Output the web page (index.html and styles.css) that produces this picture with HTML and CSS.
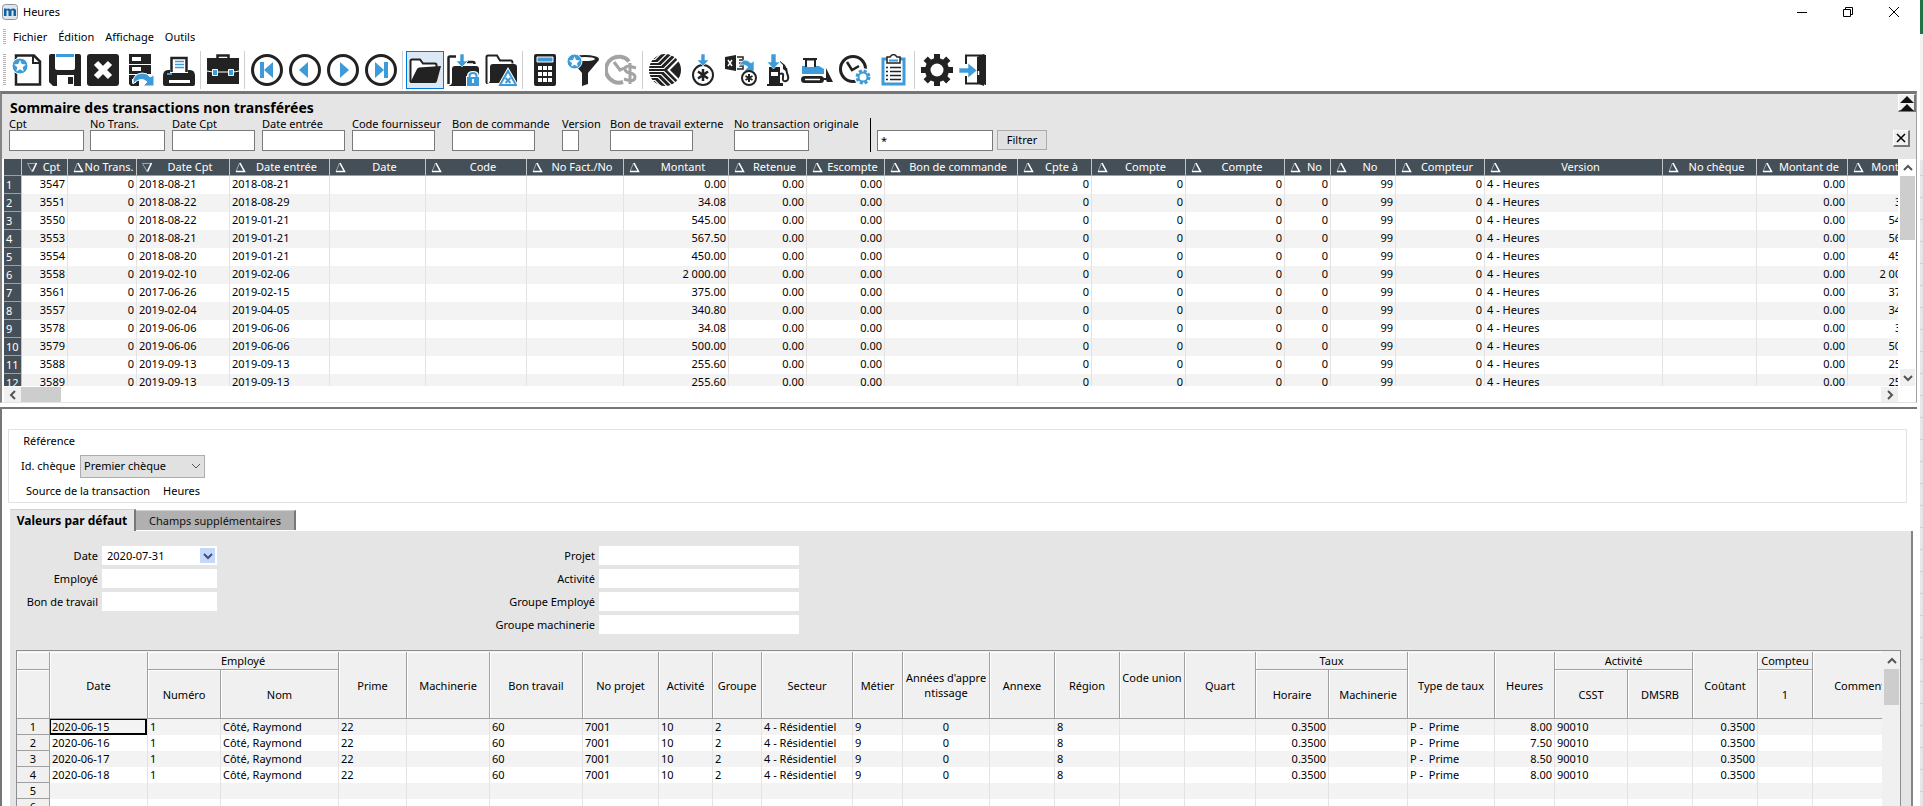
FILE: index.html
```html
<!DOCTYPE html>
<html lang="fr">
<head>
<meta charset="UTF-8">
<meta name="viewport" content="width=device-width, initial-scale=1.0">
<title>Heures</title>
<link rel="stylesheet" href="styles.css">
</head>
<body>

<div class="desktop">
<main class="window">

  <header class="titlebar">
    <svg class="logo" viewBox="0 0 16 16"><rect x=".5" y=".5" width="15" height="15" rx="3" fill="#dfe6ec" stroke="#8b959e"/><path d="M2 12V4.500h2.500v1q2-2 4 0 3-2 5.500.5V12h-2.500V7q-1-1.500-2 0v5h-3V7q-1-1.500-2 0v5z" fill="#0e62a6"/></svg>
    <span class="title">Heures</span>
    <div class="window-buttons">
      <button aria-label="Réduire"><svg viewBox="0 0 12 12"><path d="M1 6.500h10" stroke="#000" fill="none"/></svg></button>
      <button aria-label="Restaurer"><svg viewBox="0 0 12 12"><path d="M1.500 3.500h7v7h-7zM3.500 3V1.500h7v7H9" stroke="#000" fill="none"/></svg></button>
      <button aria-label="Fermer"><svg viewBox="0 0 12 12"><path d="M1 1l10 10M11 1L1 11" stroke="#000" fill="none"/></svg></button>
    </div>
  </header>

  <nav class="menubar">
    <span class="grip"></span>
    <a href="#">Fichier</a>
    <a href="#">Édition</a>
    <a href="#">Affichage</a>
    <a href="#">Outils</a>
  </nav>

  <div class="toolbar">
    <span class="grip"></span>
    <button aria-label="Nouveau"><svg viewBox="0 0 32 32"><path d="M5 1.500h18l6 6v23H5z" fill="#fff" stroke="#222" stroke-width="2.500"/><path d="M22 1v8h8" fill="none" stroke="#222" stroke-width="2"/><circle cx="9" cy="12" r="8" fill="#3d9bd9" stroke="#fff"/><path d="M9 6l1.700 4 4.300.4-3.300 2.800 1 4.300-3.700-2.300-3.700 2.300 1-4.300L3 10.400l4.300-.4z" fill="#fff"/></svg></button>
    <button aria-label="Enregistrer"><svg viewBox="0 0 32 32"><path d="M0 2q0-2 2-2h28q2 0 2 2v30H4l-4-4z" fill="#222"/><path d="M6 0h20v14q0 2-2 2H8q-2 0-2-2z" fill="#fff"/><path d="M7 0h18v3H7z" fill="#3d9bd9"/><path d="M8 21h17v11H8z" fill="#fff"/><path d="M19 23h5v7h-5z" fill="#222"/></svg></button>
    <button aria-label="Supprimer"><svg viewBox="0 0 32 32"><rect width="32" height="32" rx="3" fill="#222"/><path d="M9 9l14 14M23 9L9 23" stroke="#fff" stroke-width="6"/></svg></button>
    <button aria-label="Actualiser"><svg viewBox="0 0 32 32"><path d="M4 0h22v10H4zM4 11h22v9H4zM4 21h10v11H6l-2-2z" fill="#222"/><path d="M7 3h9v4H7zM7 13h9v4H7zM7 25h4v4H7z" fill="#fff"/><path d="M8 30q-1-10 9-11 6 0 8 4l4-2v11H18l4-4q-6-6-14 2z" fill="#3d9bd9" stroke="#fff"/></svg></button>
    <button aria-label="Imprimer"><svg viewBox="0 0 32 32"><path d="M8.500 18V4h15v14" fill="#fff" stroke="#222" stroke-width="2.500"/><path d="M12 7.500h9M12 10.500h9M12 13.500h9" stroke="#3d9bd9" stroke-width="1.500"/><path d="M0 22q0-6 5-6h2v3h18v-3h2q5 0 5 6v8q0 2-2 2H2q-2 0-2-2z" fill="#222"/><path d="M4 19h5v2H4z" fill="#3d9bd9"/><path d="M6 26h21v3H6z" fill="#fff"/></svg></button>
    <span class="sep"></span>
    <button aria-label="Porte-documents"><svg viewBox="0 0 32 32"><path d="M10.500 5V1.500h11V5" fill="none" stroke="#222" stroke-width="2.500"/><path d="M0 4h32v26H0z" fill="#222"/><path d="M0 17q5 1 7 1h18q3 0 7-1" fill="none" stroke="#fff"/><path d="M5.500 15.500h5v6h-5zM21.500 15.500h5v6h-5z" fill="#3d9bd9" stroke="#fff"/></svg></button>
    <span class="sep"></span>
    <button aria-label="Premier"><svg viewBox="0 0 32 32"><circle cx="16" cy="16" r="14.500" fill="#fff" stroke="#222" stroke-width="3"/><path d="M9 8h4v16H9zM22 8v16l-9-8z" fill="#3d9bd9"/></svg></button>
    <button aria-label="Précédent"><svg viewBox="0 0 32 32"><circle cx="16" cy="16" r="14.500" fill="#fff" stroke="#222" stroke-width="3"/><path d="M19 8v16l-9-8z" fill="#3d9bd9"/></svg></button>
    <button aria-label="Suivant"><svg viewBox="0 0 32 32"><circle cx="16" cy="16" r="14.500" fill="#fff" stroke="#222" stroke-width="3"/><path d="M13 8v16l9-8z" fill="#3d9bd9"/></svg></button>
    <button aria-label="Dernier"><svg viewBox="0 0 32 32"><circle cx="16" cy="16" r="14.500" fill="#fff" stroke="#222" stroke-width="3"/><path d="M19 8h4v16h-4zM10 8v16l9-8z" fill="#3d9bd9"/></svg></button>
    <span class="sep"></span>
    <button class="active" aria-label="Ouvrir"><svg viewBox="0 0 32 32"><path d="M1.500 28V7q0-1.500 1.500-1.500h8l3 4h12q1.500 0 1.500 1.500v3" fill="#fff" stroke="#222" stroke-width="2"/><path d="M1 29L8 15q.5-1 2-1.500L32 12l-4 15q-.5 2-2 2z" fill="#222"/></svg></button>
    <button aria-label="Verrouiller"><svg viewBox="0 0 32 32"><path d="M1.500 30V4q0-1.500 1.500-1.500h6M20 8h6q1.500 0 1.500 2" fill="none" stroke="#222" stroke-width="2.500"/><path d="M1 31q3 1 4-2V15q0-3 3-3h21q3 0 3 3v17H3z" fill="#222"/><path d="M13 0h4v7h4l-6 6-6-6h4z" fill="#3d9bd9" stroke="#fff" stroke-width=".6"/><path d="M19 22h1q0-5 6-5t6 5v10H19z" fill="#fff"/><path d="M22.500 23v-1q0-3 3.500-3t3.500 3v1" fill="none" stroke="#3d9bd9" stroke-width="2"/><path d="M20 23h12v9H20z" fill="#3d9bd9"/><path d="M25 25h2v4h-2z" fill="#fff"/></svg></button>
    <button aria-label="Dossier en erreur"><svg viewBox="0 0 32 32"><path d="M1.500 29V3q0-1.500 1.500-1.500h9l3 5h11q1.500 0 1.500 3" fill="none" stroke="#222" stroke-width="2"/><path d="M1 30q3 0 4-3V13q0-3 3-3h21q3 0 3 3v16H1z" fill="#222"/><path d="M23 16l8.500 15h-17z" fill="#fff" stroke="#fff" stroke-width="3"/><path d="M23 17l8 14H15z" fill="#fff" stroke="#3d9bd9" stroke-width="2"/><path d="M20.500 24l5 5M25.500 24l-5 5" stroke="#3d9bd9" stroke-width="2"/></svg></button>
    <span class="sep"></span>
    <button aria-label="Calculatrice"><svg viewBox="0 0 32 32"><rect x="5" y="0" width="22" height="32" rx="2" fill="#222"/><path d="M8 3h16v5H8z" fill="#3d9bd9" stroke="#fff"/><path d="M11 12v16M16 12v16M21 12v16" stroke="#fff" stroke-width="4" stroke-dasharray="4 2" fill="none"/></svg></button>
    <button aria-label="Filtre"><svg viewBox="0 0 32 32"><ellipse cx="18" cy="5" rx="14" ry="4" fill="#222"/><path d="M4 6h28L21 19v11l-6 2V19z" fill="#222"/><ellipse cx="18" cy="5" rx="10" ry="2" fill="#fff"/><circle cx="7.500" cy="7.500" r="7.500" fill="#3d9bd9" stroke="#fff"/><path d="M7.500 2.500L9 6l4 .4-3 2.600.8 3.700-3.300-2-3.300 2L5 9 2 6.400 6 6z" fill="#fff"/></svg></button>
    <button aria-label="Taux"><svg viewBox="0 0 32 32"><path d="M24 7.500A13 13 0 1 0 18 28" fill="none" stroke="#a3a3a3" stroke-width="4"/><path d="M9 8l6 8 4-2" fill="none" stroke="#a3a3a3" stroke-width="3"/><path d="M31 14q-11-4-11 1 0 3 5 4t5 4q0 6-11 2M25 9v21" fill="none" stroke="#a3a3a3" stroke-width="3"/></svg></button>
    <span class="sep"></span>
    <button aria-label="Projets"><svg viewBox="0 0 32 32"><circle cx="16" cy="16" r="16" fill="#222"/><path d="M32 3.500L19.500 16 32 28.500" fill="none" stroke="#fff" stroke-width="2"/><path d="M0 5.500h6l6-6M0 8.500h9l9-9M0 11.500h12l12-12M0 14.500h15l14-14M0 17.500h15l14 14M0 20.500h12l12 12M0 23.500h9l9 9M0 26.500h6l6 6" fill="none" stroke="#fff" stroke-width="1.200"/></svg></button>
    <button aria-label="Importer"><svg viewBox="0 0 32 32"><circle cx="16" cy="21" r="10" fill="#fff" stroke="#222" stroke-width="2"/><path d="M16 15v12M11 17.500l10 7M21 17.500l-10 7" stroke="#222" stroke-width="2.500"/><path d="M14 0h4v6h4l-6 6-6-6h4z" fill="#3d9bd9" stroke="#fff" stroke-width=".6"/></svg></button>
    <button aria-label="Importer d'Excel"><svg viewBox="0 0 32 32"><path d="M0 3l11-2v16L0 15z" fill="#222"/><path d="M3 6l4 6M7 6l-4 6" stroke="#fff" stroke-width="1.500"/><path d="M12 3h6v12h-6M14 6h3M14 9h3M14 12h3" fill="none" stroke="#222" stroke-width="1.500"/><path d="M14 12q4-10 12-3l3-2v10H19l4-4q-5-4-9-1z" fill="#3d9bd9" stroke="#fff" stroke-width=".6"/><circle cx="24" cy="24" r="7" fill="#fff" stroke="#222" stroke-width="2"/><path d="M24 20v8M20.500 22l7 4M27.500 22l-7 4" stroke="#222" stroke-width="2"/></svg></button>
    <button aria-label="Carburant"><svg viewBox="0 0 32 32"><path d="M6 13h11v19H4v-2h2z" fill="#222"/><path d="M17 29h3v3h-3z" fill="#222"/><path d="M8 18h7v4H8z" fill="#fff"/><path d="M8 0h5v8h4l-6.500 7L4 8h4z" fill="#3d9bd9" stroke="#fff" stroke-width=".6"/><path d="M17 20q4-2 3 3t3 4 1-8l-1-5" fill="none" stroke="#222" stroke-width="2"/><path d="M17 7l5 4q2 3 2 7l-4-3V11l-3-3z" fill="#222"/></svg></button>
    <button aria-label="Machinerie"><svg viewBox="0 0 32 32"><path d="M1 12h17l5 3v5H1z" fill="#3d9bd9"/><path d="M5 13V5.500h9V13" fill="#fff" stroke="#222" stroke-width="2"/><path d="M2 4h14v2H2z" fill="#222"/><rect x="0" y="22" width="23" height="7" rx="3.500" fill="#222"/><path d="M4 25.500h15" stroke="#fff" stroke-width="1.500"/><path d="M20 24h5V14l7 14h-6l-1-2h-5z" fill="#222"/></svg></button>
    <button aria-label="Horaire"><svg viewBox="0 0 32 32"><circle cx="14" cy="15" r="12.500" fill="#fff" stroke="#222" stroke-width="3"/><path d="M8 8l5 8 7-4" fill="none" stroke="#222" stroke-width="2.500"/><circle cx="24" cy="23" r="9" fill="#fff"/><circle cx="24" cy="23" r="6" fill="none" stroke="#3d9bd9" stroke-width="3" stroke-dasharray="3 1.700"/><circle cx="24" cy="23" r="4.500" fill="#fff" stroke="#3d9bd9" stroke-width="2"/></svg></button>
    <button aria-label="Liste"><svg viewBox="0 0 32 32"><path d="M6 5h21v25H6z" fill="#fff" stroke="#3d9bd9" stroke-width="3"/><path d="M10 3h3q3.500-5 7 0h3v6H10z" fill="#fff" stroke="#222" stroke-width="1.500"/><path d="M12 6.500h9" stroke="#3d9bd9" stroke-width="2"/><path d="M9 13.500h15M9 17.500h15M9 21.500h15M9 25.500h15" stroke="#222" stroke-width="1.500" stroke-dasharray="2 2 11 9"/></svg></button>
    <span class="sep"></span>
    <button aria-label="Options"><svg viewBox="0 0 32 32"><circle cx="16" cy="16" r="9" fill="none" stroke="#222" stroke-width="6"/><path d="M16 0v32M0 16h32M4.700 4.700l22.600 22.600M27.300 4.700L4.700 27.300" stroke="#222" stroke-width="6"/><circle cx="16" cy="16" r="6.500" fill="#fff"/></svg></button>
    <button aria-label="Quitter"><svg viewBox="0 0 32 32"><path d="M7 10V1.500h18v28H7V22" fill="none" stroke="#222" stroke-width="2"/><path d="M18 3l7-3v32l-7-3z" fill="#222"/><path d="M26.500 1v30" stroke="#222"/><path d="M19.500 17v4" stroke="#fff" stroke-width="1.500"/><path d="M0 14h9V9l9 7.500L9 24v-5H0z" fill="#3d9bd9" stroke="#fff" stroke-width=".6"/></svg></button>
  </div>

  <section class="summary">
    <div class="summary-head">
      <h1>Sommaire des transactions non transférées</h1>
      <button class="raised collapse" aria-label="Masquer"><svg viewBox="0 0 14 16"><path d="M7 1l7 7H0zM7 9l7 7H0z" fill="#111"/></svg></button>
    </div>
    <form class="filters">
      <div class="filter"><label for="f-cpt">Cpt</label><input class="medium" id="f-cpt" type="text"></div>
      <div class="filter"><label for="f-trans">No Trans.</label><input class="medium" id="f-trans" type="text"></div>
      <div class="filter"><label for="f-datecpt">Date Cpt</label><input class="long" id="f-datecpt" type="text"></div>
      <div class="filter"><label for="f-dateent">Date entrée</label><input class="long" id="f-dateent" type="text"></div>
      <div class="filter"><label for="f-four">Code fournisseur</label><input class="long" id="f-four" type="text"></div>
      <div class="filter"><label for="f-bon">Bon de commande</label><input class="long" id="f-bon" type="text"></div>
      <div class="filter"><label for="f-ver">Version</label><input class="tiny" id="f-ver" type="text"></div>
      <div class="filter"><label for="f-ext">Bon de travail externe</label><input class="long" id="f-ext" type="text"></div>
      <div class="filter"><label for="f-orig">No transaction originale</label><input class="medium" id="f-orig" type="text"></div>
      <div class="search">
        <input type="text" value="*" aria-label="Recherche">
        <button type="button" class="filter-btn">Filtrer</button>
      </div>
      <button type="button" class="raised close" aria-label="Fermer"><svg viewBox="0 0 10 10"><path d="M1 1l8 8M9 1L1 9" stroke="#000" stroke-width="1.500" fill="none"/></svg></button>
    </form>
    <div class="grid-area">
      <div class="grid-view list-view">
        <table class="list" id="list"></table>
      </div>
      <div class="vscroll">
        <button aria-label="Haut"><svg viewBox="0 0 10 10"><path d="M1 7l4-4 4 4" /></svg></button>
        <span class="thumb"></span>
        <button class="last" aria-label="Bas"><svg viewBox="0 0 10 10"><path d="M1 3l4 4 4-4" /></svg></button>
      </div>
    </div>
    <div class="hscroll">
      <button aria-label="Gauche"><svg viewBox="0 0 10 10"><path d="M7 1L3 5l4 4" /></svg></button>
      <span class="thumb"></span>
      <button class="last" aria-label="Droite"><svg viewBox="0 0 10 10"><path d="M3 1l4 4-4 4" /></svg></button>
    </div>
  </section>

  <section class="detail">
    <div class="source">
      <div class="source-row"><span class="source-label">Référence</span></div>
      <div class="source-row">
        <label class="source-label" for="cheque">Id. chèque</label>
        <select id="cheque"><option>Premier chèque</option></select>
      </div>
      <div class="source-row source-text"><span>Source de la transaction</span><span>Heures</span></div>
    </div>

    <div class="tabs">
      <button class="tab selected">Valeurs par défaut</button>
      <button class="tab">Champs supplémentaires</button>
    </div>

    <div class="tab-panel">
      <form class="defaults">
        <div class="fields">
          <label for="d-date">Date</label>
          <div class="date-box">
            <input id="d-date" type="text" value="2020-07-31">
            <button type="button" aria-label="Calendrier"><svg viewBox="0 0 10 10"><path d="M1 3l4 4 4-4" /></svg></button>
          </div>
          <label for="d-emp">Employé</label><input id="d-emp" type="text">
          <label for="d-bon">Bon de travail</label><input id="d-bon" type="text">
        </div>
        <div class="fields wide">
          <label for="d-proj">Projet</label><input id="d-proj" type="text">
          <label for="d-act">Activité</label><input id="d-act" type="text">
          <label for="d-gemp">Groupe Employé</label><input id="d-gemp" type="text">
          <label for="d-gmach">Groupe machinerie</label><input id="d-gmach" type="text">
        </div>
      </form>

      <div class="entry-area">
        <div class="grid-view">
          <table class="entry" id="entry">
            <thead>
              <tr class="group-row">
                <th></th>
                <th rowspan="2">Date</th>
                <th colspan="2">Employé</th>
                <th rowspan="2">Prime</th>
                <th rowspan="2">Machinerie</th>
                <th rowspan="2">Bon travail</th>
                <th rowspan="2">No projet</th>
                <th rowspan="2">Activité</th>
                <th rowspan="2">Groupe</th>
                <th rowspan="2">Secteur</th>
                <th rowspan="2">Métier</th>
                <th rowspan="2">Années d'appre<br>ntissage</th>
                <th rowspan="2">Annexe</th>
                <th rowspan="2">Région</th>
                <th rowspan="2">Code union<br>&nbsp;</th>
                <th rowspan="2">Quart</th>
                <th colspan="2">Taux</th>
                <th rowspan="2">Type de taux</th>
                <th rowspan="2">Heures</th>
                <th colspan="2">Activité</th>
                <th rowspan="2">Coûtant</th>
                <th>Compteu</th>
                <th rowspan="2">Commentaire</th>
              </tr>
              <tr class="name-row">
                <th></th>
                <th>Numéro</th>
                <th>Nom</th>
                <th>Horaire</th>
                <th>Machinerie</th>
                <th>CSST</th>
                <th>DMSRB</th>
                <th>1</th>
              </tr>
            </thead>
          </table>
        </div>
        <div class="vscroll entry-scroll">
          <button aria-label="Haut"><svg viewBox="0 0 10 10"><path d="M1 7l4-4 4 4" /></svg></button>
          <span class="thumb"></span>
        </div>
      </div>
    </div>
  </section>

</main>
<aside class="behind"></aside>
</div>

<script>
  // name, width, alignment
  const listColumns = [
    ['Cpt', 46, 'right'], ['No Trans.', 69, 'right'], ['Date Cpt', 93], ['Date entrée', 100],
    ['Date', 96], ['Code', 101], ['No Fact./No', 97], ['Montant', 105, 'right'],
    ['Retenue', 78, 'right'], ['Escompte', 78, 'right'], ['Bon de commande', 133],
    ['Cpte à', 74, 'right'], ['Compte', 94, 'right'], ['Compte', 99, 'right'], ['No', 46, 'right'],
    ['No', 65, 'right'], ['Compteur', 89, 'right'], ['Version', 178], ['No chèque', 94],
    ['Montant de', 91, 'right'], ['Montant', 78, 'right']
  ];

  const transactions = [
    ['3547', '2018-08-21', '2018-08-21', '0.00'],
    ['3551', '2018-08-22', '2018-08-29', '34.08'],
    ['3550', '2018-08-22', '2019-01-21', '545.00'],
    ['3553', '2018-08-21', '2019-01-21', '567.50'],
    ['3554', '2018-08-20', '2019-01-21', '450.00'],
    ['3558', '2019-02-10', '2019-02-06', '2 000.00'],
    ['3561', '2017-06-26', '2019-02-15', '375.00'],
    ['3557', '2019-02-04', '2019-04-05', '340.80'],
    ['3578', '2019-06-06', '2019-06-06', '34.08'],
    ['3579', '2019-06-06', '2019-06-06', '500.00'],
    ['3588', '2019-09-13', '2019-09-13', '255.60'],
    ['3589', '2019-09-13', '2019-09-13', '255.60']
  ];

  const entryColumns = [
    [98], [73], [118], [68], [83], [93], [76], [54], [49], [91], [50], [87, 'center'], [65], [65],
    [65], [71], [73, 'right'], [79], [87], [60, 'right'], [73], [65], [65, 'right'], [55], [114]
  ];

  const hours = [['2020-06-15', '8.00'], ['2020-06-16', '7.50'], ['2020-06-17', '8.50'], ['2020-06-18', '8.00']];

  function sortIcon(down) {
    const light = down ? 'M5 9.500L.5 1.500h9' : 'M4.500 1L9.500 9.500H1';
    const dark = down ? 'M9.500 1L5 9.500' : 'M1 9.500L4.500 1';
    const edge = down ? 'M9.500 1L5.500 9.500' : 'M5 1l4.500 8.500H1';
    return '<svg viewBox="0 0 11 11"><path d="' + light + '" stroke="#a0a6ab" fill="none"/><path d="' + dark +
      '" stroke="#a0a6ab" fill="none"/><path d="' + edge + '" stroke="#fff" stroke-width="1.500" fill="none"/></svg>';
  }

  function cell(text, align) {
    return '<td' + (align ? ' class="' + align + '"' : '') + '>' + text + '</td>';
  }

  function buildList() {
    let html = '<colgroup><col style="width:18px">';
    listColumns.forEach(c => { html += '<col style="width:' + c[1] + 'px">'; });
    html += '</colgroup><thead><tr><th></th>';
    listColumns.forEach((c, i) => {
      html += '<th><div class="head-cell">' + sortIcon(i === 0 || i === 2) + '<span>' + c[0] + '</span></div></th>';
    });
    html += '</tr></thead><tbody>';
    transactions.forEach((t, i) => {
      const values = [t[0], '0', t[1], t[2], '', '', '', t[3], '0.00', '0.00', '', '0', '0', '0', '0', '99', '0',
        '4 - Heures', '', '0.00', t[3]];
      html += '<tr><th>' + (i + 1) + '</th>';
      values.forEach((v, j) => { html += cell(v, listColumns[j][2]); });
      html += '</tr>';
    });
    document.getElementById('list').innerHTML = html + '</tbody>';
  }

  function buildEntry() {
    const table = document.getElementById('entry');
    let cols = '<colgroup><col style="width:33px">';
    entryColumns.forEach(c => { cols += '<col style="width:' + c[0] + 'px">'; });
    table.insertAdjacentHTML('afterbegin', cols + '</colgroup>');
    let html = '<tbody>';
    for (let i = 0; i < 6; i++) {
      const h = hours[i];
      const values = h ? [h[0], '1', 'Côté, Raymond', '22', '', '60', '7001', '10', '2', '4 - Résidentiel', '9', '0', '',
        '8', '', '', '0.3500', '', 'P -&nbsp; Prime', h[1], '90010', '', '0.3500', '', ''] : entryColumns.map(() => '');
      html += '<tr><th>' + (i + 1) + '</th>';
      values.forEach((v, j) => { html += cell(v, i === 0 && j === 0 ? 'current' : entryColumns[j][1]); });
      html += '</tr>';
    }
    table.insertAdjacentHTML('beforeend', html + '</tbody>');
  }

  buildList();
  buildEntry();
</script>

</body>
</html>
```

FILE: styles.css
```css
* {
  box-sizing: border-box;
}
body {
  margin: 0;
  font-family: "Noto Sans", "Open Sans", sans-serif;
  font-size: 11px;
  line-height: 16px;
  color: #000;
  background-color: #fff;
}
button, input, select {
  font: inherit;
  color: inherit;
  margin: 0;
  padding: 0;
  border: none;
  border-radius: 0;
}
button {
  display: flex;
  align-items: center;
  justify-content: center;
  background: none;
}
.desktop {
  display: flex;
  height: 100vh;
  overflow: hidden;
}
.window {
  flex: 1;
  min-width: 0;
  display: flex;
  flex-direction: column;
  padding-right: 3px;
}
.behind {
  width: 3px;
  background: linear-gradient(#217346 34px, #f3f2f1 34px, #f3f2f1 160px, transparent 160px),
    repeating-linear-gradient(#e6e6e6 0 21px, #cfcfcf 21px 22px);
}

/* title and menu */
.titlebar {
  display: flex;
  align-items: center;
  height: 24px;
  padding-left: 2px;
}
.logo {
  width: 16px;
  height: 16px;
  margin-right: 5px;
}
.window-buttons {
  display: flex;
  margin-left: auto;
}
.window-buttons button {
  width: 46px;
  height: 20px;
}
.window-buttons svg {
  width: 12px;
  height: 12px;
}
.menubar {
  display: flex;
  align-items: center;
  gap: 11px;
  height: 26px;
  padding-left: 3px;
}
.menubar a {
  color: #000;
  text-decoration: none;
}
.grip {
  width: 3px;
  height: 16px;
  background: repeating-linear-gradient(#b4b4b4 0 1px, #fff 1px 2px);
}
.menubar .grip {
  margin-right: -4px;
}
.toolbar {
  display: flex;
  align-items: center;
  height: 40px;
  margin-bottom: 1px;
  padding-left: 3px;
}
.toolbar .grip {
  height: 32px;
  margin-right: 2px;
}
.toolbar button {
  width: 38px;
  height: 38px;
}
.toolbar button svg {
  width: 32px;
  height: 32px;
}
.toolbar .active {
  background-color: #dce9f5;
  border: 1px solid #0078d7;
}
.sep {
  width: 1px;
  height: 38px;
  margin: 0 3px 0 2px;
  background-color: #cfcfcf;
}

/* transactions summary */
.summary {
  border-top: 3px solid #767676;
  border-left: 2px solid #858585;
  border-right: 1px solid #a0a0a0;
  border-bottom: 1px solid #e3e3e3;
  background-color: #e5e5e5;
}
.summary-head {
  display: flex;
  align-items: flex-start;
  justify-content: space-between;
  height: 24px;
  padding-left: 8px;
}
h1 {
  margin: 4px 0 0;
  font-size: 14px;
  line-height: 20px;
}
.raised {
  background-color: #f0f0f0;
  border: 1px solid #fff;
  border-right: 2px solid #777;
  border-bottom: 2px solid #777;
}
.collapse {
  width: 18px;
  height: 18px;
}
.collapse svg {
  width: 14px;
  height: 16px;
}
.filters {
  display: grid;
  grid-template-columns: 81px 82px 90px 90px 100px 110px 48px 124px 136px auto 1fr;
  align-items: start;
  height: 41px;
  padding: 0 6px 0 7px;
}
.filter {
  display: flex;
  flex-direction: column;
  align-items: flex-start;
}
.filter label {
  line-height: 12px;
  white-space: nowrap;
}
.filters input {
  height: 21px;
  padding: 0 3px;
  background-color: #fff;
  border: 1px solid #7a7a7a;
}
.medium {
  width: 75px;
}
.long {
  width: 83px;
}
.tiny {
  width: 17px;
}
.search {
  display: flex;
  align-items: flex-start;
  height: 34px;
  padding: 12px 0 0 6px;
  border-left: 1px solid #000;
}
.search input {
  width: 116px;
}
.filter-btn {
  width: 50px;
  height: 20px;
  margin-left: 4px;
  background-color: #e1e1e1;
  border: 1px solid #adadad;
}
.close {
  width: 17px;
  height: 17px;
  margin-top: 12px;
  justify-self: end;
}
.close svg {
  width: 10px;
  height: 10px;
}
.grid-area {
  display: flex;
  height: 227px;
  padding-left: 2px;
  background-color: #fff;
}
.grid-view {
  flex: 1;
  min-width: 0;
  overflow: hidden;
}
table {
  width: 0;
  table-layout: fixed;
  border-collapse: separate;
  border-spacing: 0;
}
th {
  font-weight: normal;
}
td {
  padding: 0 2px;
  border-right: 1px solid #e3e3e3;
  white-space: nowrap;
}
.right {
  text-align: right;
}
.center {
  text-align: center;
}
.list th {
  height: 18px;
  padding: 0 2px;
  color: #fff;
  text-align: left;
  line-height: 16px;
  background-color: #454f58;
  border-right: 1px solid #c0c4c7;
  border-bottom: 1px solid #a0a0a0;
}
.list thead th {
  height: 17px;
}
.list td {
  height: 18px;
  padding-bottom: 2px;
  line-height: 16px;
}
.list tbody tr:nth-child(even) {
  background-color: #f3f3f3;
}
.head-cell {
  display: flex;
  align-items: center;
}
.head-cell svg {
  flex: none;
  width: 11px;
  height: 11px;
  margin-left: 3px;
}
.head-cell span {
  flex: 1;
  text-align: center;
  white-space: nowrap;
}

/* scroll bars */
.vscroll, .hscroll {
  display: flex;
  background-color: #fff;
}
.vscroll {
  flex-direction: column;
  width: 15px;
  margin: 0 1px 0 2px;
}
.vscroll button {
  height: 17px;
}
.hscroll {
  height: 16px;
  padding: 1px 18px 0 2px;
}
.hscroll button {
  width: 17px;
  background-color: #f0f0f0;
}
.vscroll svg, .hscroll svg {
  width: 10px;
  height: 10px;
}
.vscroll path, .hscroll path {
  stroke: #555;
  stroke-width: 2;
  fill: none;
}
.thumb {
  background-color: #cdcdcd;
}
.vscroll .thumb {
  height: 64px;
}
.hscroll .thumb {
  width: 40px;
}
.vscroll .last {
  margin-top: auto;
  background-color: #f0f0f0;
}
.hscroll .last {
  margin-left: auto;
}

/* detail */
.detail {
  flex: 1;
  min-height: 0;
  display: flex;
  flex-direction: column;
  margin-top: 4px;
  border-top: 2px solid #767676;
  border-left: 2px solid #767676;
}
.source {
  display: flex;
  flex-direction: column;
  gap: 2px;
  margin: 20px 10px 0 6px;
  padding: 0 0 0 12px;
  height: 74px;
  border: 1px solid #e3e3e3;
}
.source-row {
  display: flex;
  align-items: center;
  height: 23px;
}
.source-label {
  width: 54px;
  margin-right: 5px;
  text-align: right;
  white-space: nowrap;
}
.source-text {
  gap: 13px;
  padding-left: 5px;
}
select {
  appearance: none;
  width: 125px;
  height: 23px;
  padding: 0 3px;
  border: 1px solid #adadad;
  background: #e1e1e1 url("data:image/svg+xml,%3Csvg xmlns='http://www.w3.org/2000/svg' viewBox='0 0 10 10'%3E%3Cpath d='M1 3l4 4 4-4' fill='none' stroke='%23555'/%3E%3C/svg%3E") right 3px center / 10px no-repeat;
}
.tabs {
  display: flex;
  align-items: flex-end;
  margin: 6px 0 0 8px;
}
.tab {
  height: 20px;
  width: 160px;
  margin-bottom: 1px;
  background-color: #b0b0b0;
  border-top: 1px solid #d0d0d0;
  border-right: 2px solid #777;
  color: #111;
}
.tab.selected {
  width: 126px;
  height: 22px;
  margin-bottom: 0;
  background-color: #e5e5e5;
  font-size: 12px;
  font-weight: bold;
  color: #000;
}
.tab-panel {
  flex: 1;
  min-height: 0;
  display: flex;
  flex-direction: column;
  margin: 0 4px 0 8px;
  padding: 15px 10px 0 6px;
  background-color: #e5e5e5;
  border-right: 2px solid #858585;
}
.defaults {
  display: flex;
  align-items: flex-start;
  gap: 272px;
  height: 104px;
}
.fields {
  display: grid;
  grid-template-columns: 82px 115px;
  grid-auto-rows: 19px;
  gap: 4px;
}
.fields.wide {
  grid-template-columns: 106px 200px;
}
.fields label {
  line-height: 19px;
  text-align: right;
}
.fields input {
  width: 100%;
  height: 19px;
  padding: 0 5px;
  background-color: #fff;
}
.date-box {
  display: flex;
  align-items: center;
  padding-right: 2px;
  background-color: #fff;
}
.date-box input {
  flex: 1;
  min-width: 0;
}
.date-box button {
  width: 15px;
  height: 15px;
  background-color: #c6d8fa;
}
.date-box svg {
  width: 10px;
  height: 10px;
}
.date-box path {
  stroke: #405080;
  stroke-width: 2;
  fill: none;
}
.entry-area {
  flex: 1;
  min-height: 0;
  display: flex;
  border: 1px solid #8e8f93;
  border-bottom: none;
  padding-top: 1px;
  background-color: #f0f0f0;
}
.entry thead th {
  padding: 0;
  background-color: #f0f0f0;
  border-right: 1px solid #a0a0a0;
  border-bottom: 1px solid #a0a0a0;
  box-shadow: inset 1px 1px #fff;
  line-height: 15px;
  white-space: nowrap;
}
.group-row {
  height: 18px;
}
.name-row {
  height: 49px;
}
.entry tbody th {
  height: 16px;
  padding: 0;
  line-height: 15px;
  background-color: #f0f0f0;
  border-right: 1px solid #a0a0a0;
  border-bottom: 1px solid #a0a0a0;
}
.entry td {
  height: 16px;
  line-height: 16px;
  background-color: #fff;
}
.entry tbody tr:nth-child(odd) td {
  background-color: #f3f3f3;
}
.entry .current {
  box-shadow: inset 1px 1px #000, inset -2px -2px #000;
}
.entry-scroll {
  background-color: #f0f0f0;
}
.entry-scroll .thumb {
  height: 36px;
}
```
